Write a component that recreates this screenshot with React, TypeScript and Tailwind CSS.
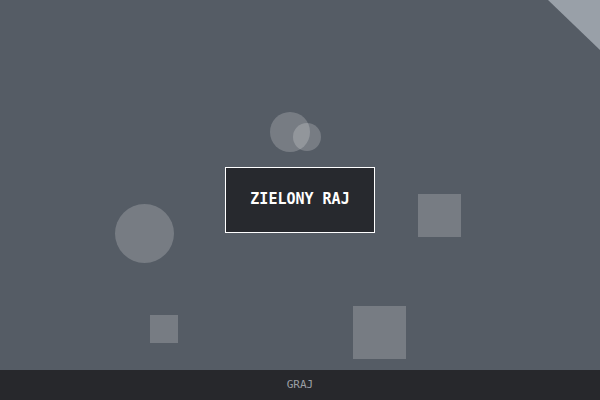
import React from 'react';

const mono = { fontFamily: '"DejaVu Sans Mono", "Liberation Mono", monospace' };

// decorative shapes scattered on the backdrop
const shapes = [
  { cls: 'left-[270px] top-[112px] w-[40px] h-[40px] rounded-full' },
  { cls: 'left-[293px] top-[123px] w-[28px] h-[28px] rounded-full' },
  { cls: 'left-[115px] top-[204px] w-[59px] h-[59px] rounded-full' },
  { cls: 'left-[418px] top-[194px] w-[43px] h-[43px]' },
  { cls: 'left-[353px] top-[306px] w-[53px] h-[53px]' },
  { cls: 'left-[150px] top-[315px] w-[28px] h-[28px]' },
];

const App: React.FC = () => {
  return (
    <div className="w-[600px] h-[400px] flex flex-col bg-[#555c65] overflow-hidden" style={mono}>
      <div className="relative flex-1 flex items-center justify-center pt-[29px]">
        {shapes.map((s, i) => (
          <div key={i} className={`absolute bg-white/20 ${s.cls}`} />
        ))}
        <svg className="absolute right-0 top-0" width="52" height="50" viewBox="0 0 52 50">
          <polygon points="0,0 52,0 52,50" fill="#99a0a8" />
        </svg>
        <div className="relative w-[150px] h-[66px] border border-white bg-[#27292e] flex items-center justify-center">
          <span className="text-white text-[15px] font-semibold">ZIELONY RAJ</span>
        </div>
      </div>
      <div className="h-[30px] bg-[#27282c] flex items-center justify-center">
        <span className="text-[11px] text-[#9a9ea3]">GRAJ</span>
      </div>
    </div>
  );
};

export default App;
